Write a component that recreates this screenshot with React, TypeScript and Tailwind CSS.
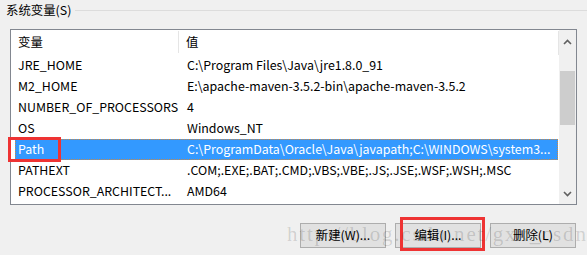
import React from "react";

type EnvVar = { name: string; value: string };

const vars: EnvVar[] = [
  { name: "JRE_HOME", value: "C:\\Program Files\\Java\\jre1.8.0_91" },
  { name: "M2_HOME", value: "E:\\apache-maven-3.5.2-bin\\apache-maven-3.5.2" },
  { name: "NUMBER_OF_PROCESSORS", value: "4" },
  { name: "OS", value: "Windows_NT" },
  { name: "Path", value: "C:\\ProgramData\\Oracle\\Java\\javapath;C:\\WINDOWS\\system3..." },
  { name: "PATHEXT", value: ".COM;.EXE;.BAT;.CMD;.VBS;.VBE;.JS;.JSE;.WSF;.WSH;.MSC" },
  { name: "PROCESSOR_ARCHITECT...", value: "AMD64" },
];

function Chevron({ up }: { up?: boolean }) {
  return (
    <svg width="9" height="6" viewBox="0 0 9 6" className="block">
      <polyline
        points={up ? "1,5 4.5,1.5 8,5" : "1,1 4.5,4.5 8,1"}
        fill="none"
        stroke="#606060"
        strokeWidth="1.6"
      />
    </svg>
  );
}

export default function App() {
  return (
    <div className="relative w-[587px] h-[255px] overflow-hidden bg-[#f0f0f0] text-[12.4px] text-black font-['Microsoft_YaHei','Noto_Sans_CJK_SC',sans-serif]">
      {/* group box title */}
      <div className="flex items-center h-[20px] pl-[6px]">
        <span className="leading-none">系统变量(S)</span>
        <div className="flex-1 h-px bg-[#dcdcdc] ml-[4px]" />
      </div>

      {/* list view */}
      <div className="ml-[10px] mt-[9px] w-[567px] h-[176px] border border-[#828790] bg-white flex overflow-hidden">
        <div className="flex-1 flex flex-col min-w-0">
          <div className="flex h-[25px] shrink-0 items-stretch">
            <div className="w-[168px] flex items-center pl-[7px] pb-[1px] relative">
              变量
              <div className="absolute right-0 top-[1px] bottom-[2px] w-px bg-[#e5e5e5]" />
            </div>
            <div className="flex-1 flex items-center pl-[7px] pb-[1px] relative">
              值
              <div className="absolute right-0 top-[1px] bottom-0 w-px bg-[#e5e5e5]" />
            </div>
          </div>
          {vars.map((v) => {
            const sel = v.name === "Path";
            return (
              <div key={v.name} className="flex h-[21px] shrink-0">
                <div
                  className={
                    sel
                      ? "flex flex-1 ml-[4px] mr-[1px] bg-[#3399ff] text-white border border-dotted border-[#cc8844]"
                      : "flex flex-1 ml-[4px] mr-[1px] border border-transparent"
                  }
                >
                  <div className="w-[164px] pl-[2px] flex items-center whitespace-nowrap overflow-hidden">
                    {v.name}
                  </div>
                  <div className="flex-1 pl-[7px] flex items-center whitespace-nowrap overflow-hidden">
                    {v.value}
                  </div>
                </div>
              </div>
            );
          })}
        </div>
        <div className="w-[17px] bg-[#f0f0f0] flex flex-col items-center">
          <div className="h-[17px] flex items-center justify-center mt-[3px]">
            <Chevron up />
          </div>
          <div className="w-[15px] h-[54px] bg-[#cdcdcd] mt-[21px]" />
          <div className="flex-1" />
          <div className="h-[17px] flex items-center justify-center mb-[2px]">
            <Chevron />
          </div>
        </div>
      </div>

      {/* buttons */}
      <div className="flex justify-end gap-[9px] pr-[11px] mt-[18px]">
        {["新建(W)...", "编辑(I)...", "删除(L)"].map((t) => (
          <button
            key={t}
            type="button"
            className="w-[86px] h-[25px] border border-[#adadad] bg-[#e1e1e1] flex items-center justify-center"
          >
            {t}
          </button>
        ))}
      </div>

      {/* annotations */}
      <div className="absolute left-[8px] top-[137px] w-[53px] h-[25px] border-[3px] border-[#ee3333]" />
      <div className="absolute left-[400px] top-[217px] w-[85px] h-[34px] border-[3px] border-[#ee3333]" />
      <div className="absolute left-[287px] top-[224px] text-[21px] tracking-[1.8px] text-black/15 font-['Liberation_Serif',serif] leading-none whitespace-nowrap">
        http://blog.csdn.net/gxx_csdn
      </div>
    </div>
  );
}
